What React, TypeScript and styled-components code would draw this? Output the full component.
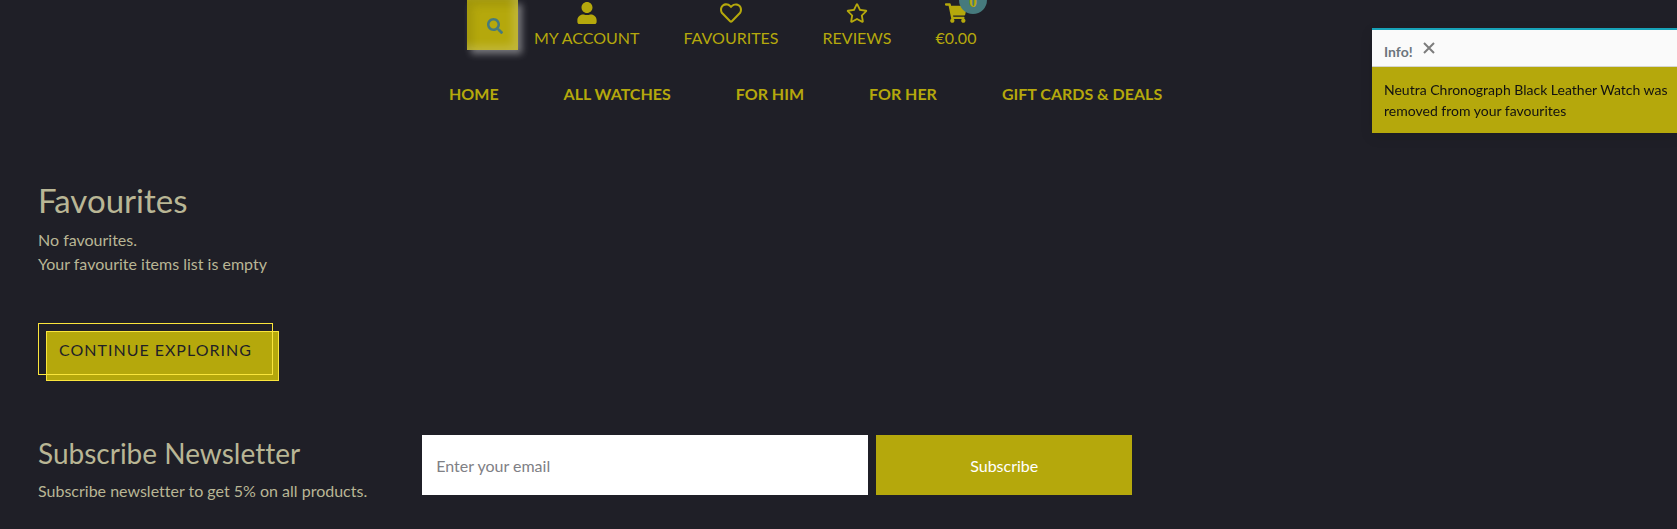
import React from "react";
import styled, { createGlobalStyle } from "styled-components";
import { FaUser, FaRegHeart, FaRegStar, FaShoppingCart, FaSearch } from "react-icons/fa";

const gold = "#b5a80c";
const sand = "#b9b695";
const ink = "#1f1f27";

const GlobalStyle = createGlobalStyle`
  *, *::before, *::after { box-sizing: border-box; }
  body {
    margin: 0;
    background: ${ink};
    color: ${sand};
    font: 400 16px/24px Lato, sans-serif;
    font-variant-ligatures: none;
  }
  h1, h2, p, ul { margin: 0; padding: 0; }
  ul { list-style: none; }
  a { color: inherit; text-decoration: none; }
  button, input { font: inherit; border: 0; border-radius: 0; }
`;

const Page = styled.div`
  overflow: hidden;
`;

const Header = styled.header`
  color: ${gold};
  text-transform: uppercase;
`;

const Tools = styled.div`
  display: flex;
  align-items: flex-start;
  padding-left: 467px;
`;

const SearchButton = styled.button`
  display: flex;
  align-items: center;
  justify-content: center;
  width: 51px;
  height: 50px;
  padding: 2px 0 0 4px;
  background: ${gold};
  color: #467a7d;
  cursor: pointer;
  box-shadow:
    inset -5px -4px 8px rgba(255, 255, 255, 0.2),
    inset 5px 5px 8px rgba(70, 70, 0, 0.18),
    4px 4px 7px rgba(255, 255, 255, 0.4);
`;

const ToolList = styled.ul`
  display: flex;
  gap: 44px;
  padding: 2px 0 0 16px;
`;

const ToolLink = styled.a`
  display: flex;
  flex-direction: column;
  align-items: center;
`;

const ToolIcon = styled.span`
  position: relative;
  display: flex;
  font-size: 22px;
  height: 24px;
`;

const Badge = styled.span`
  position: absolute;
  top: -16px;
  left: 14px;
  width: 28px;
  height: 28px;
  padding-top: 2px;
  border-radius: 50%;
  background: #467a7d;
  font: 700 16px/28px "Liberation Serif", serif;
  text-align: center;
`;

const Nav = styled.nav`
  padding: 32px 0 0 449px;
  font-weight: 700;
`;

const NavList = styled.ul`
  display: flex;
  gap: 65px;
  white-space: nowrap;
`;

const Main = styled.main`
  padding: 74px 38px 0;
`;

const Title = styled.h1`
  font-size: 33px;
  line-height: 40px;
  font-weight: 400;
  margin-bottom: 8px;
`;

const ExploreLink = styled.a`
  position: relative;
  display: inline-block;
  margin-top: 47px;
  height: 52px;
  padding: 0 20px;
  border: 1px solid #fae53c;
  color: ${ink};
  line-height: 52px;
  letter-spacing: 1px;
  text-transform: uppercase;

  &::before {
    content: "";
    position: absolute;
    z-index: -1;
    top: 7px;
    left: 7px;
    right: -7px;
    bottom: -7px;
    background: ${gold};
    border: 1px solid #fae53c;
  }
`;

const ExploreWrap = styled.div`
  position: relative;
  z-index: 0;
  display: flex;
`;

const Newsletter = styled.section`
  display: flex;
  align-items: flex-start;
  padding: 60px 38px 24px;
`;

const NewsletterText = styled.div`
  flex: 0 0 24%;
`;

const Subtitle = styled.h2`
  font-size: 28px;
  line-height: 36px;
  font-weight: 400;
  margin-bottom: 8px;
`;

const Form = styled.form`
  display: grid;
  grid-template-columns: 446fr 256fr;
  gap: 8px;
  flex: 0 1 710px;
`;

const EmailInput = styled.input`
  min-width: 0;
  height: 60px;
  padding: 0 14px;
  background: #fff;
  color: #333;
  &::placeholder { color: #808085; opacity: 1; }
`;

const SubscribeButton = styled.button`
  height: 60px;
  padding: 2px 0 0;
  background: ${gold};
  color: #fff;
  cursor: pointer;
`;

const Toast = styled.aside`
  position: fixed;
  top: 28px;
  right: 0;
  width: 305px;
  border-top: 2px solid #17a2b8;
  background: ${gold};
  color: #111;
  font-size: 14px;
  line-height: 21px;
  box-shadow: 0 4px 12px rgba(0, 0, 0, 0.1);
`;

const ToastHead = styled.div`
  display: flex;
  align-items: flex-start;
  gap: 9px;
  height: 37px;
  padding: 11px 12px 0;
  background: #fafafa;
  border-bottom: 1px solid #d5d5d0;
  color: #6c757d;
`;

const CloseButton = styled.button`
  padding: 0;
  background: none;
  color: #7c7c7c;
  line-height: 0;
  cursor: pointer;
`;

const ToastText = styled.p`
  padding: 12px 8px 12px 12px;
`;

const tools = [
  { label: "My account", icon: <FaUser /> },
  { label: "Favourites", icon: <FaRegHeart /> },
  { label: "Reviews", icon: <FaRegStar /> },
  { label: "€0.00", icon: <FaShoppingCart />, count: 0 },
];

const links = ["Home", "All watches", "For him", "For her", "Gift cards & deals"];

export default function App() {
  return (
    <Page>
      <GlobalStyle />
      <Header>
        <Tools>
          <SearchButton type="button" aria-label="Search">
            <FaSearch size={16} />
          </SearchButton>
          <ToolList>
            {tools.map((t) => (
              <li key={t.label}>
                <ToolLink href="#">
                  <ToolIcon>
                    {t.icon}
                    {t.count !== undefined && <Badge>{t.count}</Badge>}
                  </ToolIcon>
                  {t.label}
                </ToolLink>
              </li>
            ))}
          </ToolList>
        </Tools>
        <Nav>
          <NavList>
            {links.map((l) => (
              <li key={l}>
                <a href="#">{l}</a>
              </li>
            ))}
          </NavList>
        </Nav>
      </Header>
      <Main>
        <Title>Favourites</Title>
        <p>No favourites.</p>
        <p>Your favourite items list is empty</p>
        <ExploreWrap>
          <ExploreLink href="#">Continue exploring</ExploreLink>
        </ExploreWrap>
      </Main>
      <Newsletter>
        <NewsletterText>
          <Subtitle>Subscribe Newsletter</Subtitle>
          <p>Subscribe newsletter to get 5% on all products.</p>
        </NewsletterText>
        <Form onSubmit={(e) => e.preventDefault()}>
          <EmailInput type="email" aria-label="Email" placeholder="Enter your email" />
          <SubscribeButton type="submit">Subscribe</SubscribeButton>
        </Form>
      </Newsletter>
      <Toast role="status">
        <ToastHead>
          <strong>Info!</strong>
          <CloseButton type="button" aria-label="Close">
            <svg width="14" height="14" viewBox="0 0 14 14" stroke="currentColor" strokeWidth="2">
              <path d="M2 2L12 12M12 2L2 12" />
            </svg>
          </CloseButton>
        </ToastHead>
        <ToastText>Neutra Chronograph Black Leather Watch was removed from your favourites</ToastText>
      </Toast>
    </Page>
  );
}
